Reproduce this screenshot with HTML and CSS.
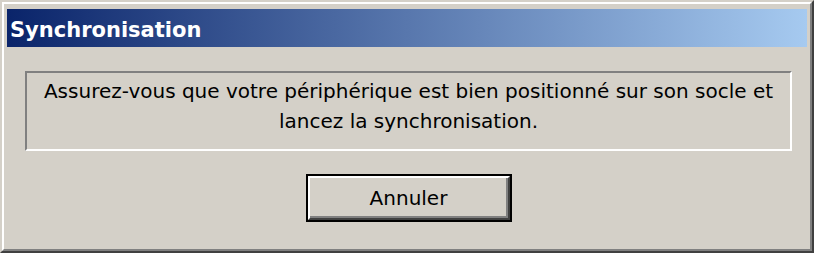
FILE: index.html
```html
<!DOCTYPE html>
<html lang="fr">
<head>
<meta charset="utf-8">
<title>Synchronisation</title>
<link rel="stylesheet" href="styles.css">
</head>
<body>
<div class="window">
  <div class="window-inner">
    <div class="titlebar">Synchronisation</div>
    <div class="content">
      <div class="message">Assurez-vous que votre périphérique est bien positionné sur son socle et<br>lancez la synchronisation.</div>
      <div class="actions">
        <button class="btn" type="button"><span class="btn-face">Annuler</span></button>
      </div>
    </div>
  </div>
</div>
</body>
</html>
```

FILE: styles.css
```css
html, body {
  margin: 0;
  padding: 0;
  background: #ffffff;
}
body {
  font-family: "DejaVu Sans", Tahoma, sans-serif;
}
.window {
  width: 814px;
  height: 253px;
  box-sizing: border-box;
  border: 2px solid;
  border-color: #d4d0c8 #404040 #404040 #d4d0c8;
  background: #d4d0c8;
}
.window-inner {
  height: 100%;
  box-sizing: border-box;
  border: 2px solid;
  border-color: #ffffff #808080 #808080 #ffffff;
  padding: 5px 3px 3px 3px;
  display: flex;
  flex-direction: column;
}
.titlebar {
  height: 38px;
  box-sizing: border-box;
  background: linear-gradient(to right, #0a246a, #a6caf0);
  color: #ffffff;
  font-weight: bold;
  font-size: 21px;
  line-height: 38px;
  padding: 2px 0 0 3px;
}
.content {
  padding: 24px 15px 0 18px;
  display: flex;
  flex-direction: column;
}
.message {
  height: 80px;
  box-sizing: border-box;
  border: 2px solid;
  border-color: #808080 #ffffff #ffffff #808080;
  text-align: center;
  font-size: 20px;
  line-height: 30px;
  color: #000;
  padding-top: 3px;
}
.actions {
  display: flex;
  justify-content: center;
  padding-top: 23px;
}
.btn {
  width: 206px;
  height: 48px;
  padding: 0;
  margin: 0;
  border: 2px solid #000000;
  background: #d4d0c8;
  font: inherit;
  cursor: default;
  display: flex;
}
.btn-face {
  flex: 1;
  display: flex;
  align-items: center;
  justify-content: center;
  border: 2px solid;
  border-color: #ffffff #404040 #404040 #ffffff;
  box-shadow: inset -2px -2px 0 #808080;
  font-size: 20px;
  color: #000;
}
```
